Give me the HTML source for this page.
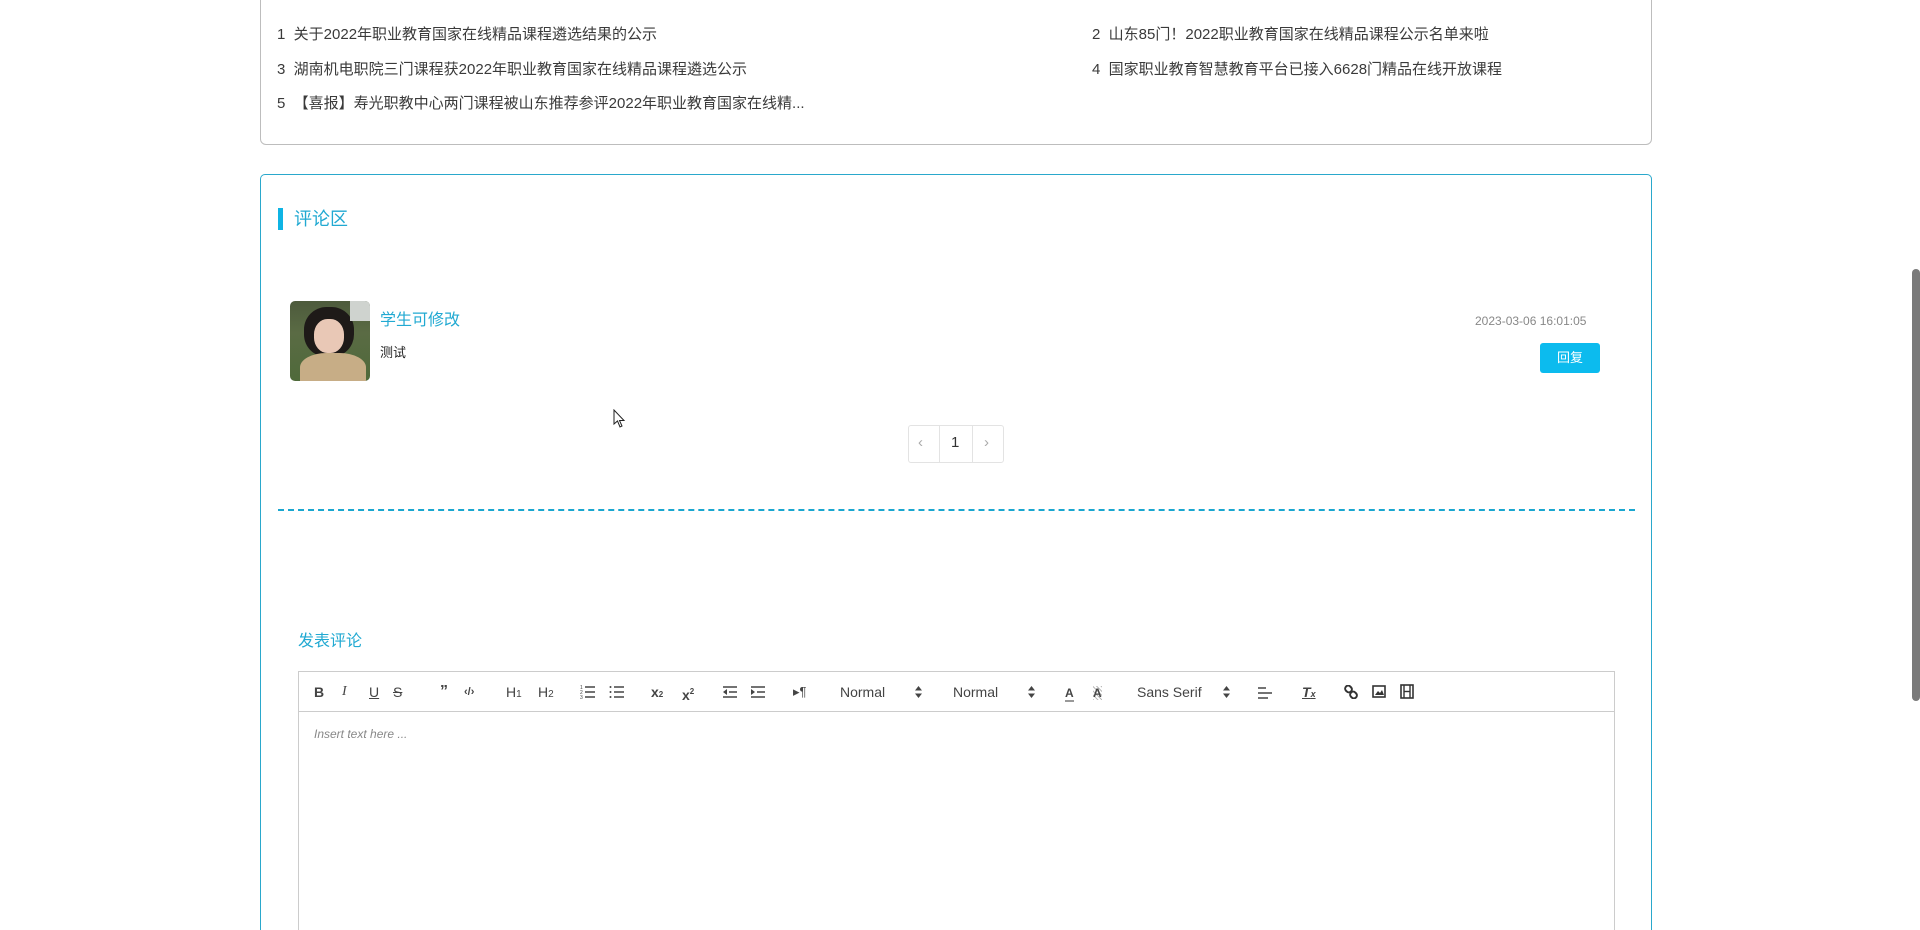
<!DOCTYPE html>
<html><head><meta charset="utf-8"><style>
*{margin:0;padding:0;box-sizing:border-box}
html,body{width:1920px;height:930px;overflow:hidden}
body{background:#fff;font-family:"Liberation Sans","Noto Sans CJK SC",sans-serif;color:#333;position:relative}
.a{position:absolute;white-space:nowrap}
.card1{position:absolute;left:260px;top:-20px;width:1392px;height:165px;border:1px solid #bdbdbd;border-radius:6px}
.card2{position:absolute;left:260px;top:174px;width:1392px;height:756px;border:1px solid #2aa8cc;border-bottom:none;border-radius:5px 5px 0 0}
.li{font-size:15px;color:#3a3a3a;line-height:20px}
.tb{position:absolute;top:682px;font-size:14px;color:#444;line-height:20px;font-weight:bold}
.tbt{position:absolute;top:682px;font-size:14px;color:#444;line-height:20px}
</style></head><body>
<div class="card1"></div>
<div class="a li" style="left:277px;top:25px">1&nbsp; 关于2022年职业教育国家在线精品课程遴选结果的公示</div>
<div class="a li" style="left:1092px;top:25px">2&nbsp; 山东85门！2022职业教育国家在线精品课程公示名单来啦</div>
<div class="a li" style="left:277px;top:60px">3&nbsp; 湖南机电职院三门课程获2022年职业教育国家在线精品课程遴选公示</div>
<div class="a li" style="left:1092px;top:60px">4&nbsp; 国家职业教育智慧教育平台已接入6628门精品在线开放课程</div>
<div class="a li" style="left:277px;top:94px">5&nbsp; 【喜报】寿光职教中心两门课程被山东推荐参评2022年职业教育国家在线精...</div>

<div class="card2"></div>
<div class="a" style="left:278px;top:208px;width:5px;height:22px;background:#0fb4e4"></div>
<div class="a" style="left:294px;top:207px;font-size:18px;color:#21a9d2;line-height:24px">评论区</div>

<div class="a" style="left:290px;top:301px;width:80px;height:80px;border-radius:5px;overflow:hidden;background:linear-gradient(180deg,#4d5a3c 0%,#5a6b44 40%,#4f6a3a 100%)">
<div style="position:absolute;left:14px;top:6px;width:50px;height:50px;border-radius:45%;background:#1e1a18"></div>
<div style="position:absolute;left:24px;top:18px;width:30px;height:34px;border-radius:45%;background:#e9c8b6"></div>
<div style="position:absolute;left:10px;top:52px;width:66px;height:36px;border-radius:40% 40% 0 0;background:#c7ad86"></div>
<div style="position:absolute;left:60px;top:0;width:20px;height:20px;background:#cfd3cf"></div>
</div>
<div class="a" style="left:380px;top:311px;font-size:16px;color:#21a9d2;line-height:20px">学生可修改</div>
<div class="a" style="left:380px;top:344px;font-size:13px;color:#222;line-height:18px">测试</div>
<div class="a" style="left:1475px;top:314px;font-size:12px;color:#888;line-height:14px">2023-03-06 16:01:05</div>
<div class="a" style="left:1540px;top:343px;width:60px;height:30px;background:#0cbbee;border-radius:3px;color:#fff;font-size:13px;line-height:30px;text-align:center">回复</div>

<div class="a" style="left:908px;top:425px;width:96px;height:38px;border:1px solid #e3e3e3;border-radius:3px"></div>
<div class="a" style="left:939px;top:425px;width:1px;height:38px;background:#e3e3e3"></div>
<div class="a" style="left:972px;top:425px;width:1px;height:38px;background:#e3e3e3"></div>
<div class="a" style="left:918px;top:434px;font-size:15px;color:#aaa">‹</div>
<div class="a" style="left:951px;top:434px;font-size:15px;color:#333">1</div>
<div class="a" style="left:984px;top:434px;font-size:15px;color:#aaa">›</div>

<div class="a" style="left:278px;top:509px;width:1357px;height:0;border-top:2px dashed #1aa7d0"></div>

<div class="a" style="left:298px;top:632px;font-size:16px;color:#21a9d2;line-height:20px">发表评论</div>
<div class="a" style="left:298px;top:671px;width:1317px;height:270px;border:1px solid #ccc"></div>
<div class="a" style="left:298px;top:711px;width:1317px;height:1px;background:#ccc"></div>
<div class="a" style="left:314px;top:727px;font-size:12px;color:#888;font-style:italic">Insert text here ...</div>

<div class="tb" style="left:314px">B</div>
<div class="tbt" style="left:342px;font-style:italic;font-family:'Liberation Serif',serif">I</div>
<div class="tbt" style="left:369px;text-decoration:underline">U</div>
<div class="tbt" style="left:393px;text-decoration:line-through">S</div>
<div class="tb" style="left:440px;font-size:16px">”</div>
<div class="tb" style="left:464px;font-size:11px">‹/›</div>
<div class="tbt" style="left:506px">H<span style="font-size:10px">1</span></div>
<div class="tbt" style="left:538px">H<span style="font-size:10px">2</span></div>
<svg class="a" style="left:580px;top:685px" width="16" height="14"><g stroke="#444" stroke-width="1.5"><line x1="5" y1="2" x2="15" y2="2"/><line x1="5" y1="7" x2="15" y2="7"/><line x1="5" y1="12" x2="15" y2="12"/></g><g fill="#444" font-size="5"><text x="0" y="4">1</text><text x="0" y="9">2</text><text x="0" y="14">3</text></g></svg>
<svg class="a" style="left:609px;top:685px" width="16" height="14"><g stroke="#444" stroke-width="1.5"><line x1="5" y1="2" x2="15" y2="2"/><line x1="5" y1="7" x2="15" y2="7"/><line x1="5" y1="12" x2="15" y2="12"/></g><g fill="#444"><circle cx="1.5" cy="2" r="1"/><circle cx="1.5" cy="7" r="1"/><circle cx="1.5" cy="12" r="1"/></g></svg>
<div class="tb" style="left:651px">x<span style="font-size:8px">2</span></div>
<div class="tb" style="left:682px">x<span style="font-size:8px;vertical-align:6px">2</span></div>
<svg class="a" style="left:722px;top:685px" width="16" height="14"><g stroke="#444" stroke-width="1.5"><line x1="1" y1="2" x2="15" y2="2"/><line x1="7" y1="7" x2="15" y2="7"/><line x1="1" y1="12" x2="15" y2="12"/></g><path d="M5 4 L1 7 L5 10Z" fill="#444"/></svg>
<svg class="a" style="left:750px;top:685px" width="16" height="14"><g stroke="#444" stroke-width="1.5"><line x1="1" y1="2" x2="15" y2="2"/><line x1="7" y1="7" x2="15" y2="7"/><line x1="1" y1="12" x2="15" y2="12"/></g><path d="M1 4 L5 7 L1 10Z" fill="#444"/></svg>
<div class="tbt" style="left:793px;font-size:13px">▸¶</div>
<div class="tbt" style="left:840px">Normal</div>
<svg class="a" style="left:915px;top:686px" width="7" height="12"><path d="M3.5 0 L7 4.5 L0 4.5Z M3.5 12 L7 7.5 L0 7.5Z" fill="#444"/></svg>
<div class="tbt" style="left:953px">Normal</div>
<svg class="a" style="left:1028px;top:686px" width="7" height="12"><path d="M3.5 0 L7 4.5 L0 4.5Z M3.5 12 L7 7.5 L0 7.5Z" fill="#444"/></svg>
<div class="tb" style="left:1065px;font-size:12px;border-bottom:2px solid #999;line-height:14px;top:686px">A</div>
<div class="tb" style="left:1093px;font-size:12px;top:686px;line-height:14px;background:repeating-linear-gradient(45deg,#bbb 0 1px,#fff 1px 3px)">A</div>
<div class="tbt" style="left:1137px">Sans Serif</div>
<svg class="a" style="left:1223px;top:686px" width="7" height="12"><path d="M3.5 0 L7 4.5 L0 4.5Z M3.5 12 L7 7.5 L0 7.5Z" fill="#444"/></svg>
<svg class="a" style="left:1257px;top:685px" width="16" height="14"><g stroke="#444" stroke-width="1.5"><line x1="1" y1="3" x2="9" y2="3"/><line x1="1" y1="8" x2="15" y2="8"/><line x1="1" y1="13" x2="11" y2="13"/></g></svg>
<div class="tb" style="left:1302px;font-style:italic;text-decoration:underline">T<span style="font-size:9px">x</span></div>
<svg class="a" style="left:1344px;top:685px" width="14" height="14"><g fill="none" stroke="#333" stroke-width="2"><rect x="1" y="1" width="7" height="6" rx="3" transform="rotate(45 4.5 4)"/><rect x="6" y="7" width="7" height="6" rx="3" transform="rotate(45 9.5 10)"/></g></svg>
<svg class="a" style="left:1372px;top:685px" width="14" height="13"><rect x="1" y="1" width="12" height="11" fill="none" stroke="#333" stroke-width="1.6"/><path d="M3 10 L6 6 L8 8 L10 5 L12 10Z" fill="#333"/></svg>
<svg class="a" style="left:1400px;top:684px" width="14" height="15"><rect x="1" y="1" width="12" height="13" fill="none" stroke="#333" stroke-width="1.6"/><g stroke="#333" stroke-width="1.4"><line x1="4" y1="1" x2="4" y2="14"/><line x1="10" y1="1" x2="10" y2="14"/><line x1="4" y1="7.5" x2="10" y2="7.5"/></g></svg>

<div class="a" style="left:1912px;top:269px;width:8px;height:432px;background:#7a7a7a;border-radius:4px"></div>
<svg class="a" style="left:613px;top:409px" width="14" height="20"><path d="M1 1 L1 15 L4.5 12 L7 18 L9 17 L6.5 11.5 L11 11.5Z" fill="#fff" stroke="#222" stroke-width="1"/></svg>
</body></html>
